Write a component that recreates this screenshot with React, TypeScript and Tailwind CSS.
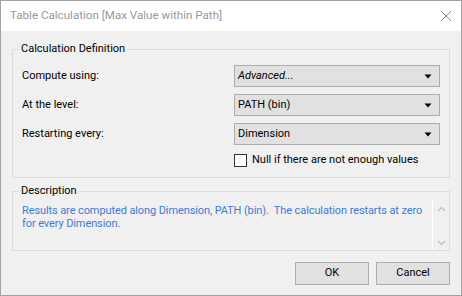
import React from "react";

const Arrow = () => (
  <svg width="8" height="5" viewBox="0 0 8 5" className="shrink-0">
    <path d="M0.5 0.5 H7.5 L4 4.5 Z" fill="#000" />
  </svg>
);

const Select = ({ value, italic = false }: { value: string; italic?: boolean }) => (
  <div className="w-[206px] h-[22px] border border-[#adadad] bg-[#e1e1e1] flex items-center justify-between pl-[3px] pr-[7px]">
    <span className={italic ? "italic" : ""}>{value}</span>
    <Arrow />
  </div>
);

const Row = ({ label, children }: { label: string; children: React.ReactNode }) => (
  <div className="flex items-center justify-between h-[22px]">
    <span>{label}</span>
    {children}
  </div>
);

const Chevron = ({ up }: { up?: boolean }) => (
  <svg width="9" height="6" viewBox="0 0 9 6">
    <path d={up ? "M1 5 L4.5 1.5 L8 5" : "M1 1 L4.5 4.5 L8 1"} fill="none" stroke="#c2c2c2" strokeWidth="1.3" />
  </svg>
);

export default function App() {
  return (
    <div className="w-[462px] h-[296px] border border-[#a3a3a3] bg-[#f0f0f0] flex flex-col font-['Roboto',sans-serif] text-[11px] text-black">
      <div className="h-[30px] bg-white flex items-center justify-between pl-[9px] pr-[9px] shrink-0">
        <span className="text-[11.6px] text-[#999999]">Table Calculation [Max Value within Path]</span>
        <svg width="12" height="12" viewBox="0 0 12 12">
          <path d="M1 1 L11 11 M11 1 L1 11" stroke="#8a8a8a" strokeWidth="1" fill="none" />
        </svg>
      </div>

      <div className="flex flex-col px-[11px]">
        <fieldset className="mt-[10px] border border-[#dcdcdc]">
          <legend className="ml-[6px] px-[2px] leading-[16px]">Calculation Definition</legend>
          <div className="flex flex-col gap-[7px] pt-[8px] pl-[9px] pr-[9px]">
            <Row label="Compute using:">
              <Select value="Advanced..." italic />
            </Row>
            <Row label="At the level:">
              <Select value="PATH (bin)" />
            </Row>
            <Row label="Restarting every:">
              <Select value="Dimension" />
            </Row>
          </div>
          <div className="flex justify-end pr-[9px] pt-[9px] pb-[10px]">
            <label className="w-[206px] flex items-center gap-[5px] h-[13px]">
              <span className="w-[13px] h-[13px] border border-[#333333] bg-white shrink-0" />
              <span>Null if there are not enough values</span>
            </label>
          </div>
        </fieldset>

        <fieldset className="mt-[5px] border border-[#dcdcdc]">
          <legend className="ml-[6px] px-[2px] leading-[16px]">Description</legend>
          <div className="flex h-[51px]">
            <p className="flex-1 pl-[9px] pt-[5px] leading-[13px] text-[#3f7bd6] whitespace-pre tracking-[-0.1px]">
              {"Results are computed along Dimension, PATH (bin).  The calculation restarts at zero"}
              <br />
              {"for every Dimension."}
            </p>
            <div className="w-[17px] border-l border-white flex flex-col items-center justify-between pt-[7px] pb-[4px]">
              <Chevron up />
              <Chevron />
            </div>
          </div>
        </fieldset>

        <div className="flex justify-end gap-[7px] mt-[11px]">
          <button className="w-[74px] h-[23px] border border-[#adadad] bg-[#e1e1e1]">OK</button>
          <button className="w-[74px] h-[23px] border border-[#adadad] bg-[#e1e1e1]">Cancel</button>
        </div>
      </div>
    </div>
  );
}
